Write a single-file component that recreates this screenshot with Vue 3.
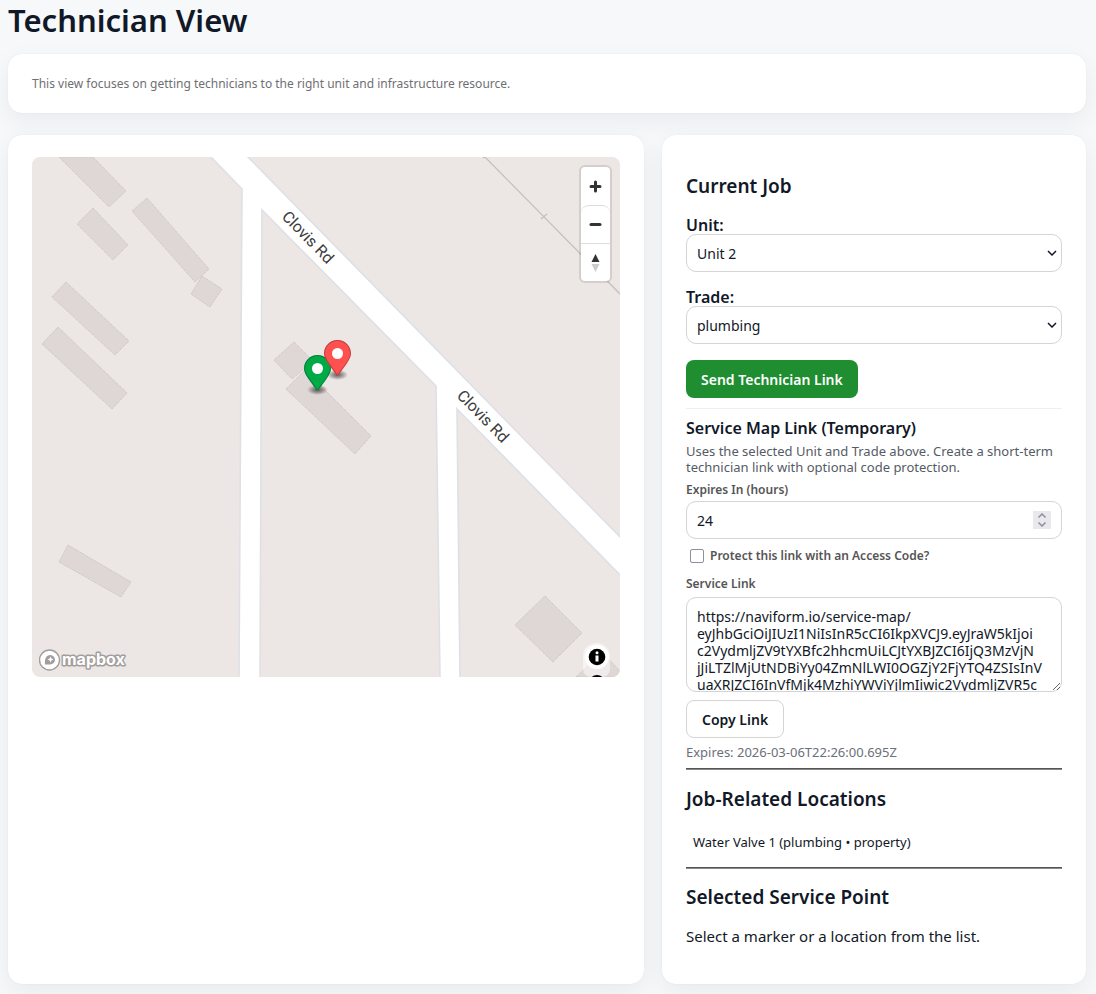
<script setup>
import { ref } from 'vue'

const unit = ref('Unit 2')
const trade = ref('plumbing')
const hours = ref(24)
const protect = ref(false)
const link = ref(
  [
    'https://naviform.io/service-map/',
    'eyJhbGciOiJIUzI1NiIsInR5cCI6IkpXVCJ9.eyJraW5kIjoi',
    'c2VydmljZV9tYXBfc2hhcmUiLCJtYXBJZCI6IjQ3MzVjN',
    'jJiLTZlMjUtNDBiYy04ZmNlLWI0OGZjY2FjYTQ4ZSIsInV',
    'uaXRJZCI6InVfMjk4MzhiYWViYjlmIiwic2VydmljZVR5c'
  ].join('\n')
)

const land = [
  '-2,-2 177,-2 210,32 207,522 -2,522',
  '230,53 404,229 408,522 228,522',
  '425,252 590,420 590,522 428,522',
  '214,-2 590,-2 590,382'
]
const buildings = [
  '27,0 61,0 94,34 77,50',
  '61,51 96,88 81,103 45,67',
  '115,41 177,112 163,125 100,54',
  '170,119 190,132 178,150 159,137',
  '34,125 97,184 83,198 20,140',
  '26,170 95,236 80,252 10,187',
  '262,185 281,204 260,222 242,203',
  '254,232 273,213 339,279 323,297',
  '36,388 99,425 89,440 27,405',
  '513,439 550,476 521,505 483,468',
  '544,520 570,495 588,514 588,520'
]
const markers = [
  { x: 272, y: 198, color: '#00aa46' },
  { x: 292, y: 183, color: '#ff5050' }
]
</script>

<template>
  <main class="page">
    <h1>Technician View</h1>
    <section class="card intro">
      <p>This view focuses on getting technicians to the right unit and infrastructure resource.</p>
    </section>

    <div class="columns">
      <section class="card">
        <div class="map">
          <svg class="tiles" viewBox="0 0 588 520" preserveAspectRatio="xMidYMid slice" aria-label="Map">
            <defs>
              <radialGradient id="pin-shadow">
                <stop offset="0" stop-color="#000" stop-opacity=".6" />
                <stop offset=".5" stop-color="#000" stop-opacity=".32" />
                <stop offset="1" stop-color="#000" stop-opacity="0" />
              </radialGradient>
            </defs>
            <rect width="588" height="520" fill="#fff" />
            <polygon v-for="p in land" :key="p" :points="p" fill="#ece6e4" stroke="#dfe0e6" stroke-width="1.6" />
            <polygon v-for="p in buildings" :key="p" :points="p" fill="#dfd7d5" stroke="#c6bfbd" stroke-width="1" stroke-dasharray="1 1" />
            <path d="M453 0L588 137M509 62l6-5M451 1l4-2" fill="none" stroke="#c4c0be" stroke-width="1.3" />
            <g class="road-name">
              <text transform="translate(272 84) rotate(45.6)">Clovis Rd</text>
              <text transform="translate(447 263) rotate(45.6)">Clovis Rd</text>
            </g>
            <g v-for="m in markers" :key="m.color" :transform="`translate(${m.x} ${m.y})`">
              <ellipse cx="13.5" cy="34.8" rx="10.5" ry="5.25" fill="url(#pin-shadow)" />
              <path
                :fill="m.color"
                d="M27 13.5C27 19.07 20.25 27 14.75 34.5 14.02 35.5 12.98 35.5 12.25 34.5 6.75 27 0 19.22 0 13.5 0 6.04 6.04 0 13.5 0S27 6.04 27 13.5Z"
              />
              <path
                fill-opacity=".25"
                d="M13.5 0C6.04 0 0 6.04 0 13.5 0 19.22 6.75 27 12.25 34.5 13 35.52 14.02 35.5 14.75 34.5 20.25 27 27 19.07 27 13.5 27 6.04 20.96 0 13.5 0ZM13.5 1C20.42 1 26 6.58 26 13.5 26 15.9 24.5 19.18 22.22 22.74 19.95 26.3 16.71 30.14 13.94 33.91 13.74 34.18 13.61 34.32 13.5 34.44 13.39 34.32 13.26 34.18 13.06 33.91 10.28 30.13 7.41 26.31 5.02 22.77 2.62 19.23 1 15.95 1 13.5 1 6.58 6.58 1 13.5 1Z"
              />
              <circle cx="13.5" cy="13.5" r="5.5" fill="#fff" />
            </g>
          </svg>

          <div class="zoom">
            <button type="button" aria-label="Zoom in">
              <svg width="29" height="29" viewBox="0 0 29 29"><path d="M14.5 10v9M10 14.5h9" stroke="#333" stroke-width="3" stroke-linecap="round" /></svg>
            </button>
            <button type="button" aria-label="Zoom out">
              <svg width="29" height="29" viewBox="0 0 29 29"><path d="M10 14.5h9" stroke="#333" stroke-width="3" stroke-linecap="round" /></svg>
            </button>
            <button type="button" aria-label="Reset bearing to north">
              <svg width="29" height="29" viewBox="0 0 29 29"><path d="M10.5 14l4-8 4 8z" fill="#333" /><path d="M10.5 16l4 8 4-8z" fill="#ccc" /></svg>
            </button>
          </div>

          <a class="brand" href="#" aria-label="Mapbox homepage">
            <svg width="88" height="24" viewBox="0 0 88 24">
              <circle cx="10.5" cy="12" r="10" fill="#fff" stroke="#a29e9d" stroke-width="1.4" />
              <path d="M6 16.5C5.500 11 7 7 11.5 7a4.700 4.700 0 0 1 4.500 4.700C16 16 11.500 17 6 16.500Z" fill="#a29e9d" />
              <path d="M11.5 8.600l.9 2 2 .9-2 .9-.9 2-.9-2-2-.9 2-.9z" fill="#fff" />
              <text x="23" y="17">mapbox</text>
            </svg>
          </a>

          <div class="credits">
            <button type="button" aria-label="Toggle attribution">
              <svg width="24" height="24" viewBox="0 0 24 24"><circle cx="12" cy="12" r="8.300" /><circle cx="12" cy="7.700" r="1.500" fill="#fff" /><path d="M10.500 10.500h3v6h-3z" fill="#fff" /></svg>
            </button>
            <svg class="next" width="24" height="24" viewBox="0 0 24 24"><circle cx="12" cy="14" r="8" /></svg>
          </div>
        </div>
      </section>

      <section class="card job">
        <h2>Current Job</h2>
        <label class="field-name" for="unit">Unit:</label>
        <div class="select">
          <select id="unit" v-model="unit"><option>Unit 2</option></select>
          <svg width="10" height="6" viewBox="0 0 10 6"><path d="M1 1l4 4 4-4" /></svg>
        </div>
        <label class="field-name next-field" for="trade">Trade:</label>
        <div class="select">
          <select id="trade" v-model="trade"><option>plumbing</option></select>
          <svg width="10" height="6" viewBox="0 0 10 6"><path d="M1 1l4 4 4-4" /></svg>
        </div>
        <button class="btn primary" type="button">Send Technician Link</button>

        <div class="share">
          <h3>Service Map Link (Temporary)</h3>
          <p class="hint">Uses the selected Unit and Trade above. Create a short-term technician link with optional code protection.</p>
          <label class="small" for="hours">Expires In (hours)</label>
          <div class="number">
            <input id="hours" v-model="hours" type="number" />
            <div class="stepper">
              <button type="button" aria-label="Increase" @click="hours++"><svg width="10" height="5" viewBox="0 0 10 5"><path d="M1.500 4.500l3.500-3.500 3.500 3.500" /></svg></button>
              <button type="button" aria-label="Decrease" @click="hours--"><svg width="10" height="5" viewBox="0 0 10 5"><path d="M1.500.5l3.500 3.500 3.500-3.500" /></svg></button>
            </div>
          </div>
          <label class="check"><input v-model="protect" type="checkbox" /><span>Protect this link with an Access Code?</span></label>
          <label class="small" for="link">Service Link</label>
          <textarea id="link" v-model="link" readonly wrap="off"></textarea>
          <button class="btn copy" type="button">Copy Link</button>
          <p class="expires">Expires: 2026-03-06T22:26:00.695Z</p>
        </div>

        <hr />
        <h2>Job-Related Locations</h2>
        <ul class="locations"><li>Water Valve 1 (plumbing • property)</li></ul>
        <hr />
        <h2 class="selected">Selected Service Point</h2>
        <p class="empty">Select a marker or a location from the list.</p>
      </section>
    </div>
  </main>
</template>

<style>
body {
  margin: 0;
  background: #f6f8fa;
}
</style>

<style scoped>
* {
  box-sizing: border-box;
}
.page {
  padding: 0 10px 10px 8px;
  color: #111827;
  font-family: "Noto Sans", "Open Sans", sans-serif;
  font-size: 16px;
}
h1, h2, h3, p, ul, hr {
  margin: 0;
}
h1 {
  font-size: 31px;
  line-height: 40px;
  font-weight: 600;
}
h2 {
  margin-top: 17px;
  font-size: 19px;
  line-height: 24px;
  font-weight: 600;
}
h2.selected {
  margin-top: 16px;
}
h3 {
  font-size: 16px;
  line-height: 20px;
  font-weight: 600;
}
.card {
  background: #fff;
  border-radius: 14px;
  padding: 22px 24px;
  box-shadow: 0 8px 24px rgba(17, 24, 39, 0.06), 0 0 1px rgba(17, 24, 39, 0.12);
}
.intro {
  margin-top: 14px;
  height: 59px;
}
.intro p {
  font-size: 12px;
  line-height: 16px;
  color: #6f6f73;
}
.columns {
  display: grid;
  grid-template-columns: 3fr 2fr;
  gap: 18px;
  margin-top: 22px;
}
.map {
  position: relative;
  height: 520px;
  border-radius: 8px;
  overflow: hidden;
}
.tiles {
  display: block;
  width: 100%;
  height: 100%;
}
.road-name text {
  font: 400 16px Roboto, sans-serif;
  fill: #3c3c3c;
  text-anchor: middle;
}
.zoom {
  position: absolute;
  top: 10px;
  right: 10px;
  width: 29px;
  border-radius: 4px;
  background: #fff;
  box-shadow: 0 0 0 2px rgba(0, 0, 0, 0.1);
}
.zoom button {
  display: flex;
  align-items: center;
  width: 29px;
  height: 38px;
  padding: 0;
  border: 0;
  background: none;
}
.zoom button + button {
  border-top: 1px solid #ddd;
}
.zoom button:nth-child(2) {
  border-radius: 8px 8px 0 0;
}
.brand {
  position: absolute;
  left: 7px;
  bottom: 5px;
  height: 24px;
}
.brand text {
  font: 700 16px Inter, sans-serif;
  fill: #fff;
  stroke: #a29e9d;
  stroke-width: 3px;
  stroke-linejoin: round;
  paint-order: stroke;
}
.credits {
  position: absolute;
  right: 10px;
  bottom: 0;
  width: 27px;
  height: 34px;
  padding: 2px;
  border-radius: 13px 13px 8px 8px;
  background: rgba(255, 255, 255, 0.5);
  overflow: hidden;
}
.credits button {
  display: block;
  width: 24px;
  height: 24px;
  padding: 0;
  border: 0;
  border-radius: 50%;
  background: #fff;
}
.credits svg {
  display: block;
}
.job {
  display: flex;
  flex-direction: column;
  padding-bottom: 38px;
}
.field-name {
  margin-top: 18px;
  line-height: 18px;
  font-weight: 600;
}
.next-field {
  margin-top: 16px;
}
.select {
  position: relative;
}
.select select,
.number,
textarea {
  display: block;
  width: 100%;
  height: 38px;
  padding: 0 10px;
  border: 1px solid #d4d4d4;
  border-radius: 10px;
  background: #fff;
  color: #111827;
  font: inherit;
  font-size: 14px;
}
.select select {
  appearance: none;
}
.select svg {
  position: absolute;
  right: 5px;
  top: 16px;
  fill: none;
  stroke: #111827;
  stroke-width: 1.5;
  pointer-events: none;
}
.btn {
  align-self: flex-start;
  height: 38px;
  padding: 0 15px;
  border: 0;
  border-radius: 8px;
  font: inherit;
  font-size: 14px;
  font-weight: 600;
}
.primary {
  margin-top: 16px;
  background: #1e8e30;
  color: #fff;
}
.share {
  display: flex;
  flex-direction: column;
  margin-top: 10px;
  padding-top: 9px;
  border-top: 1px solid #eee;
}
.hint {
  margin-top: 5px;
  font-size: 13px;
  line-height: 16px;
  color: #555b66;
}
.small {
  margin-top: 8px;
  font-size: 12px;
  line-height: 14px;
  font-weight: 600;
  color: #555;
}
.number {
  display: flex;
  align-items: center;
  justify-content: space-between;
  margin-top: 4px;
}
.number input {
  flex: 1;
  min-width: 0;
  padding: 0;
  border: 0;
  outline: 0;
  color: inherit;
  font: inherit;
  appearance: textfield;
}
.number input::-webkit-inner-spin-button {
  appearance: none;
}
.stepper {
  display: flex;
  flex-direction: column;
  width: 18px;
  background: #e9e9ed;
}
.stepper button {
  display: flex;
  align-items: center;
  justify-content: center;
  height: 9px;
  padding: 0;
  border: 0;
  background: none;
}
.stepper path {
  fill: none;
  stroke: #8f8f9d;
  stroke-width: 1.5;
}
.check {
  display: flex;
  align-items: center;
  gap: 6px;
  margin-top: 9px;
  padding-left: 4px;
  font-size: 12px;
  line-height: 16px;
  font-weight: 600;
  color: #555;
}
.check input {
  appearance: none;
  width: 14px;
  height: 14px;
  margin: 0;
  border: 1px solid #8f8f9d;
  border-radius: 2px;
  background: #fff;
}
.check + .small {
  margin-top: 13px;
}
textarea {
  height: 95px;
  margin-top: 6px;
  padding-top: 10px;
  line-height: 17px;
  overflow: hidden;
  resize: vertical;
}
.copy {
  margin-top: 8px;
  border: 1px solid #d4d4d4;
  background: #fff;
  color: #111827;
}
.expires {
  margin-top: 6px;
  font-size: 13px;
  line-height: 16px;
  color: #6b7078;
}
hr {
  margin-top: 8px;
  border: 0;
  border-top: 1px solid #555;
  border-bottom: 1px solid #888;
}
.locations {
  margin: 23px 0 9px;
  padding: 0 7px;
  list-style: none;
  font-size: 13px;
  line-height: 16px;
}
.empty {
  margin-top: 17px;
  font-size: 15px;
  line-height: 20px;
}
</style>
